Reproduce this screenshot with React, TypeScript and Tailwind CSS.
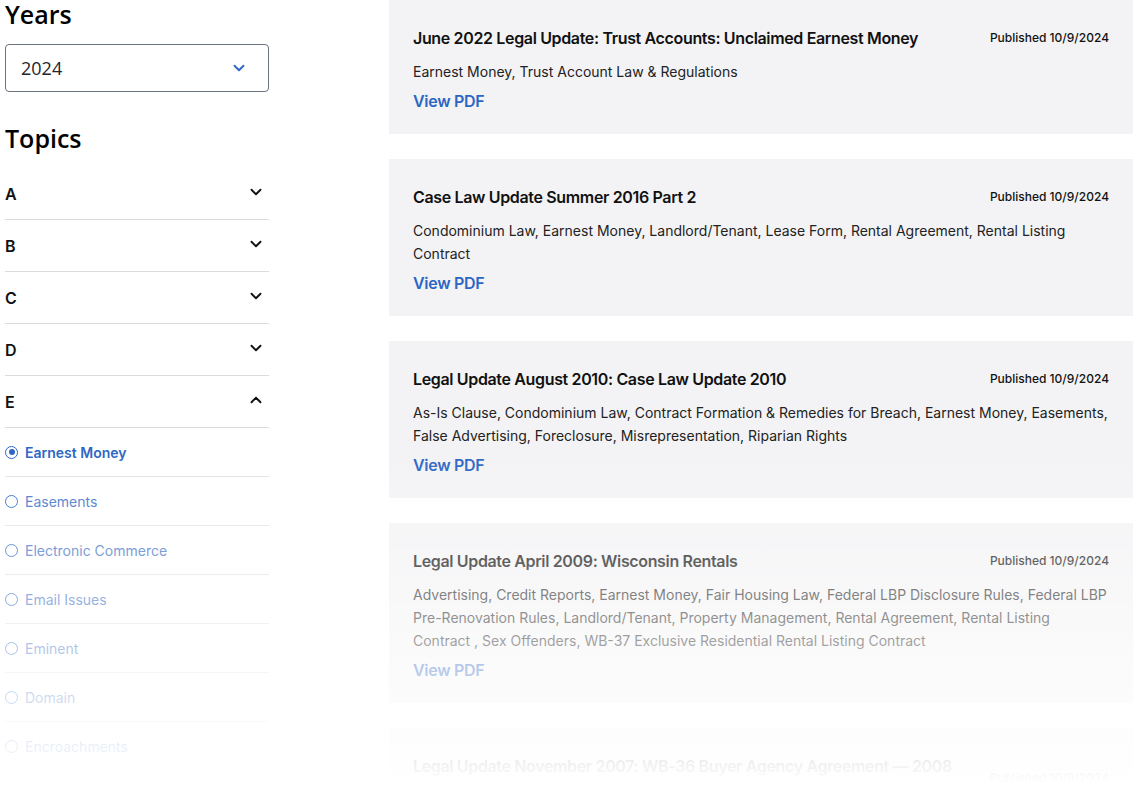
import { ChevronDown, ChevronUp } from "lucide-react";

const letters = ["A", "B", "C", "D"];

const topicsE = [
  "Earnest Money",
  "Easements",
  "Electronic Commerce",
  "Email Issues",
  "Eminent",
  "Domain",
  "Encroachments",
];

const updates = [
  {
    title: "June 2022 Legal Update: Trust Accounts: Unclaimed Earnest Money",
    tags: "Earnest Money, Trust Account Law & Regulations",
  },
  {
    title: "Case Law Update Summer 2016 Part 2",
    tags: "Condominium Law, Earnest Money, Landlord/Tenant, Lease Form, Rental Agreement, Rental Listing Contract",
  },
  {
    title: "Legal Update August 2010: Case Law Update 2010",
    tags: "As-Is Clause, Condominium Law, Contract Formation & Remedies for Breach, Earnest Money, Easements, False Advertising, Foreclosure, Misrepresentation, Riparian Rights",
  },
  {
    title: "Legal Update April 2009: Wisconsin Rentals",
    tags: "Advertising, Credit Reports, Earnest Money, Fair Housing Law, Federal LBP Disclosure Rules, Federal LBP Pre-Renovation Rules, Landlord/Tenant, Property Management, Rental Agreement, Rental Listing Contract , Sex Offenders, WB-37 Exclusive Residential Rental Listing Contract",
  },
  {
    title: "Legal Update November 2007: WB-36 Buyer Agency Agreement — 2008 Revisions",
    tags: "Buyer Agency, Earnest Money, Agency Law",
  },
];

function Sidebar() {
  return (
    <aside className="w-[264px] shrink-0">
      <h2 className="font-['Open_Sans',sans-serif] text-[25px] font-semibold leading-[28px] text-black">
        Years
      </h2>
      <div className="mt-[16px] flex h-[48px] items-center justify-between rounded-[4px] border border-[#6b7280] pl-[15px] pr-[20px]">
        <span className="font-['Open_Sans',sans-serif] text-[18px] text-[#1f2430]">2024</span>
        <ChevronDown className="h-[18px] w-[18px] text-[#2c66c3]" strokeWidth={2.5} />
      </div>

      <h2 className="mt-[32px] font-['Open_Sans',sans-serif] text-[25px] font-semibold leading-[28px] text-black">
        Topics
      </h2>

      <div className="mt-[16px]">
        {letters.map((l) => (
          <div
            key={l}
            className="flex h-[52px] items-center justify-between border-b border-[#dcdcdc] pr-[4px]"
          >
            <span className="text-[16px] font-semibold text-[#111]">{l}</span>
            <ChevronDown className="-mt-[4px] h-[18px] w-[18px] text-[#111]" strokeWidth={2.5} />
          </div>
        ))}
        <div className="flex h-[52px] items-center justify-between border-b border-[#dcdcdc] pr-[4px]">
          <span className="text-[16px] font-semibold text-[#111]">E</span>
          <ChevronUp className="-mt-[4px] h-[18px] w-[18px] text-[#111]" strokeWidth={2.5} />
        </div>
        {topicsE.map((t, i) => {
          const active = i === 0;
          return (
            <div
              key={t}
              className="flex h-[49px] items-center gap-[7px] border-b border-[#e2e2e2]"
            >
              <span className="flex h-[13px] w-[13px] items-center justify-center rounded-full border-[1.5px] border-[#2c66c3]">
                {active && <span className="h-[6px] w-[6px] rounded-full bg-[#2c66c3]" />}
              </span>
              <span
                className={`text-[14px] ${
                  active ? "font-semibold text-[#2c66c3]" : "text-[#3f73c8]"
                }`}
              >
                {t}
              </span>
            </div>
          );
        })}
      </div>
    </aside>
  );
}

function UpdateCard({ title, tags }: { title: string; tags: string }) {
  return (
    <div className="bg-[#f3f3f5] px-[24px] pb-[21px] pt-[26px]">
      <div className="flex items-center justify-between gap-[24px]">
        <h3 className="flex-1 text-[16px] font-semibold leading-[24px] tracking-[-0.35px] text-[#111]">
          {title}
        </h3>
        <span className="shrink-0 text-[12px] font-medium text-[#111]">
          Published 10/9/2024
        </span>
      </div>
      <p className="mt-[10px] text-[14px] leading-[23px] text-[#222]">{tags}</p>
      <a className="mt-[6px] block text-[16px] font-semibold leading-[24px] tracking-[-0.3px] text-[#2c66c3]">
        View PDF
      </a>
    </div>
  );
}

export default function App() {
  return (
    <div className="relative h-[785px] overflow-hidden bg-white font-['Inter',sans-serif]">
      <div className="flex gap-[120px] pl-[5px]">
        <Sidebar />
        <main className="flex w-[744px] shrink-0 flex-col gap-[25px]">
          {updates.map((u) => (
            <UpdateCard key={u.title} title={u.title} tags={u.tags} />
          ))}
        </main>
      </div>
      <div className="pointer-events-none absolute inset-x-0 bottom-0 top-[450px] bg-gradient-to-b from-white/0 to-white" />
    </div>
  );
}
